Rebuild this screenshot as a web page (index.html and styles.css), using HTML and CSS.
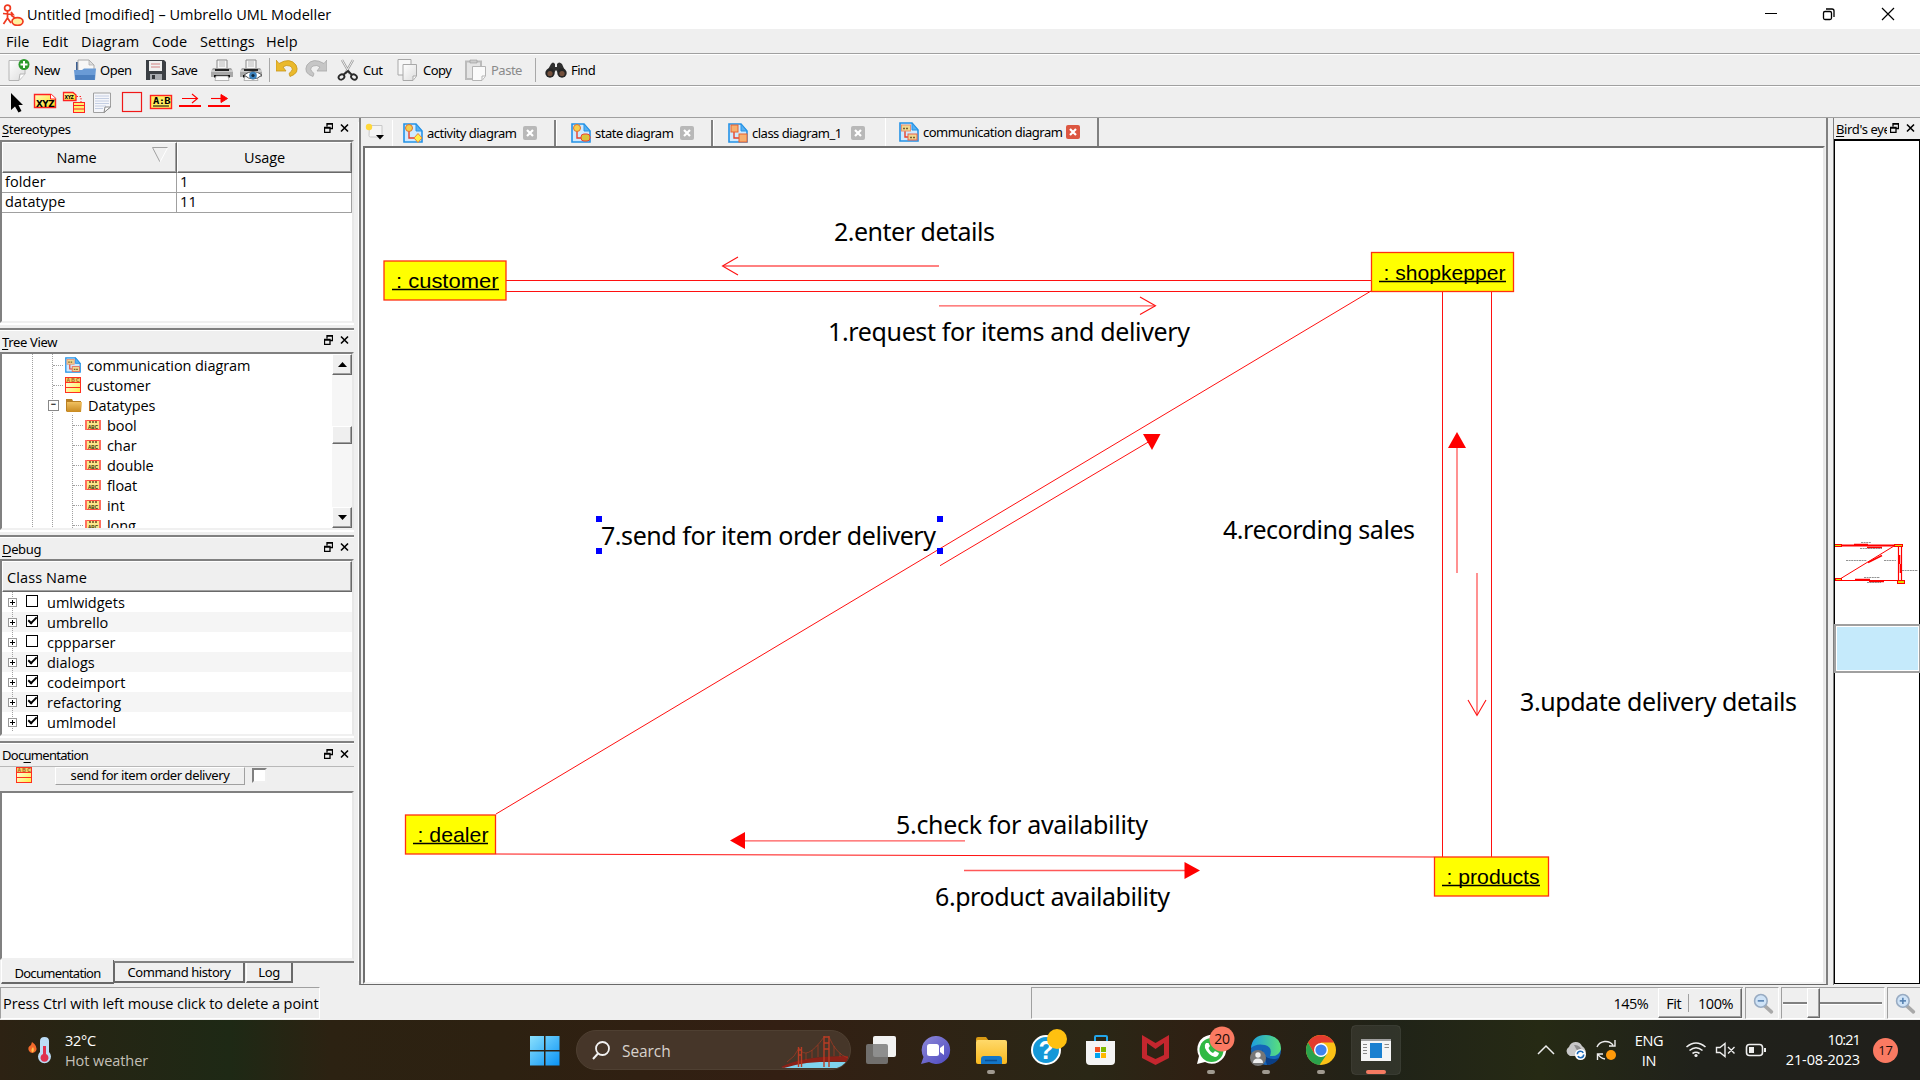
FILE: index.html
```html
<!DOCTYPE html>
<html lang="en">
<head>
<meta charset="utf-8">
<title>Untitled [modified] – Umbrello UML Modeller</title>
<link rel="stylesheet" href="styles.css">
</head>
<body>
<svg class="defs" aria-hidden="true">
  <defs>
    <linearGradient id="gFolder" x1="0" y1="0" x2="0" y2="1"><stop offset="0" stop-color="#f0c060"/><stop offset="1" stop-color="#c98a20"/></linearGradient>
    <linearGradient id="gClass" x1="0" y1="0" x2="1" y2="1"><stop offset="0" stop-color="#fff"/><stop offset="1" stop-color="#ffef40"/></linearGradient>
    <linearGradient id="gXyz" x1="0" y1="0" x2="1" y2="1"><stop offset="0" stop-color="#fffbc0"/><stop offset="1" stop-color="#ffdc10"/></linearGradient>
    <linearGradient id="gPage" x1="0" y1="0" x2="1" y2="1"><stop offset="0" stop-color="#fff"/><stop offset="1" stop-color="#dcdcdc"/></linearGradient>
    <linearGradient id="gWin" x1="0" y1="0" x2="1" y2="1"><stop offset="0" stop-color="#8ae0fd"/><stop offset="1" stop-color="#0a93f5"/></linearGradient>
  </defs>
  <symbol id="float" viewBox="0 0 9 10"><path d="M3 3.500V.5H8.500V5.500H6M3 1.200H8.500M.5 4.500H6V9.500H.5ZM.5 5.200H6" fill="none" stroke="#000" stroke-width="1.300"/></symbol>
  <symbol id="close" viewBox="0 0 9 9"><path d="M1 1 8 8M8 1 1 8" stroke="#000" stroke-width="1.600"/></symbol>
  <symbol id="class" viewBox="0 0 16 16" overflow="visible"><rect x=".5" y=".5" width="15" height="15" fill="url(#gClass)" stroke="#ff3020"/><rect x="1" y="1" width="14" height="4" fill="#f3d36a"/><path d="M1 5.500H15M1 10.500H15" stroke="#ff3020"/><text x="1.500" y="5" font-size="5" font-weight="700" textLength="13" fill="#a85a20" font-family="Liberation Sans">ABC</text></symbol>
  <symbol id="dtype" viewBox="0 0 16 10" overflow="visible"><rect x=".5" y=".5" width="15" height="9" fill="#fbe88a" stroke="#ff5040" /><path d="M4 2H12" stroke="#6a4420" stroke-width="1.600" stroke-dasharray="2 1"/><path d="M1 0V10M15 0V10" stroke="#ff7060" stroke-width="2"/><text x="3" y="8.500" font-size="6" font-weight="700" textLength="10" lengthAdjust="spacingAndGlyphs" fill="#302800" font-family="Liberation Sans">ABC</text></symbol>
  <symbol id="page" viewBox="0 0 20 20"><path d="M1 1H13L19 8V19H1Z" fill="#cfeaff" stroke="#2492e6" stroke-width="1.600"/><path d="M13 1 V8H19Z" fill="#58b0f0" stroke="#2492e6"/></symbol>
  <symbol id="d-act" viewBox="0 0 20 20"><use href="#page"/><path d="M6 6V15H11" fill="none" stroke="#e8402c" stroke-width="1.400"/><circle cx="6" cy="5" r="3.500" fill="#f5cf4c" stroke="#e07030"/><path d="M15 10.500 19 15 15 19.500 11 15Z" fill="#fff04a" stroke="#ee8030"/></symbol>
  <symbol id="d-state" viewBox="0 0 20 20"><use href="#page"/><path d="M6 6V15H11" fill="none" stroke="#e8402c" stroke-width="1.400"/><circle cx="6" cy="5" r="3.500" fill="#f5cf4c" stroke="#e07030"/><rect x="10" y="11" width="9" height="7" rx="3" fill="#d8c43c" stroke="#f04030"/></symbol>
  <symbol id="d-class" viewBox="0 0 20 20"><use href="#page"/><path d="M6 6V15H11" fill="none" stroke="#e8402c" stroke-width="1.400"/><rect x="3" y="2" width="7" height="7" fill="#f6b070" stroke="#e86030"/><rect x="11" y="11" width="8" height="8" fill="#f6b070" stroke="#e86030"/></symbol>
  <symbol id="d-comm" viewBox="0 0 20 20"><use href="#page"/><path d="M6 8V15H10" fill="none" stroke="#e8402c" stroke-width="1.400"/><rect x="2.500" y="3" width="9" height="6" fill="#f0d890" stroke="#e89070"/><rect x="9" y="12" width="9" height="6" fill="#f0d890" stroke="#e86050"/><path d="M4 6.500H10M11 15.500H16.500" stroke="#7a6030" stroke-width="1.600" stroke-dasharray="2 1"/></symbol>
  <symbol id="tabx" viewBox="0 0 14 14"><rect x="0" y="0" width="14" height="14" rx="2" fill="currentColor"/><path d="M4 4 10 10M10 4 4 10" stroke="#fff" stroke-width="2.200"/></symbol>
  <symbol id="folder" viewBox="0 0 16 16"><path d="M0 2H6L7 4H15V15H1L0 14Z" fill="#b97f22"/><path d="M1 5H16L15 15H1Z" fill="url(#gFolder)"/></symbol>
  <symbol id="mag" viewBox="0 0 20 20"><path d="M11 12 17.500 18" stroke="#a9a9a9" stroke-width="3.400" stroke-linecap="round"/><circle cx="7.500" cy="7.500" r="6" fill="#cfe3f7" stroke="#98abc2" stroke-width="1.500"/><path d="M4.500 7.500H10.500" stroke="#5580b0" stroke-width="1.500"/></symbol>
  <symbol id="printer" viewBox="0 0 22 22"><path d="M6 1H16V10H6Z" fill="#f7f7f7" stroke="#888"/><path d="M8 3H14M8 5H14M8 7H14" stroke="#bbb"/><path d="M2 9H20L22 12V18H0V12Z" fill="#a8a8a8"/><path d="M0 12H22" stroke="#eee"/><path d="M4 10H18V12H4Z" fill="#222"/><path d="M3 16H19V18.500H3Z" fill="#111"/><path d="M5 17H17L18 21.500H4Z" fill="#fafafa" stroke="#999" stroke-width=".7"/></symbol>
</svg>

<header class="titlebar">
  <svg class="applogo" width="22" height="22" viewBox="0 0 22 22" fill="none" stroke="#f03a20" stroke-width="1.700"><circle cx="5.500" cy="4" r="2.900"/><path d="M5.500 7V14L1.500 20M5.500 14 9 19M1 9.500 11 10.500 9 8"/><ellipse cx="15.500" cy="17.500" rx="5.500" ry="3.800" fill="#fff2a0"/><path d="M9 11 13 14"/></svg>
  <span class="title">Untitled [modified] – Umbrello UML Modeller</span>
  <svg class="wbtns" width="150" height="29" viewBox="1760 0 150 29" fill="none" stroke="#000"><path d="M1765 13.500H1777"/><rect x="1823.500" y="11.500" width="8" height="8" rx="1.500" stroke-width="1.300"/><path d="M1826 9H1832Q1834 9 1834 11V17" stroke-width="1.300"/><path d="M1882 8 1894 20M1894 8 1882 20" stroke-width="1.200"/></svg>
</header>

<nav class="menubar ui"><span class="m1">File</span><span class="m2">Edit</span><span class="m3">Diagram</span><span class="m4">Code</span><span class="m5">Settings</span><span class="m6">Help</span></nav>

<div class="toolbar tah">
  <button class="tb t-new"><svg width="22" height="22"><path d="M1 1.500H17V15L11 21.500H1Z" fill="url(#gPage)" stroke="#b4b4b4"/><path d="M17 15H12L11 21" fill="#fff" stroke="#b4b4b4"/><circle cx="16" cy="5.500" r="5.500" fill="#2a9a2c"/><path d="M16 2V9M12.500 5.500H19.500" stroke="#fff" stroke-width="2"/></svg>New</button>
  <button class="tb t-open"><svg width="22" height="22"><path d="M2 3H7L8 4V12H2Z" fill="#3c5f92"/><path d="M4 1H15L20 6V14H4Z" fill="#f7f7f7" stroke="#aaa"/><path d="M15 1V6H20Z" fill="#ddd" stroke="#aaa" stroke-width=".7"/><path d="M0 11H8L10 9.500H22L21 21H1Z" fill="#6a9bd6"/><path d="M1 16H21L20.500 21H1.500Z" fill="#4b7fbf"/></svg>Open</button>
  <button class="tb t-save"><svg width="22" height="22"><path d="M1 1H19L21 3V21H1Z" fill="#3b3f44"/><rect x="4" y="2" width="13" height="10" fill="#f0f0f0"/><path d="M6 5H15M6 8H15" stroke="#c66" stroke-width=".8"/><rect x="5" y="15" width="12" height="6" fill="#a8abb0"/><rect x="7" y="16" width="3" height="4" fill="#33363a"/></svg>Save</button>
  <button class="tb t-print"><svg width="22" height="22"><use href="#printer"/></svg></button>
  <button class="tb t-prev"><svg width="22" height="22"><use href="#printer"/><path d="M4 16Q13 9 22 16Q13 24 4 16Z" fill="#fff" stroke="#555"/><circle cx="13" cy="16.500" r="3.800" fill="#3c82bd"/><circle cx="13" cy="16.500" r="1.600" fill="#10283c"/></svg></button>
  <i class="vsep"></i>
  <button class="tb t-undo"><svg width="22" height="22"><path d="M0 1 3 4.500Q14-2 20 6Q24 14 14 17.500L13 14.500Q19 10 14 7Q10 5.500 7 8L10 12H0Z" fill="#eab92c" stroke="#c8951a" stroke-width=".8"/></svg></button>
  <button class="tb t-redo"><svg width="22" height="22"><path d="M22 1 19 4.500Q8-2 2 6Q-2 14 8 17.500L9 14.500Q3 10 8 7Q12 5.500 15 8L12 12H22Z" fill="#c6c6c6" stroke="#a8a8a8" stroke-width=".8"/></svg></button>
  <button class="tb t-cut"><svg width="22" height="22"><path d="M5 1 13 15M16 1 8 15" stroke="#9a9a9a" stroke-width="2.400"/><path d="M5 1 13 15M16 1 8 15" stroke="#eee" stroke-width="1"/><g fill="none" stroke="#2a2a2a" stroke-width="1.900"><ellipse cx="4.500" cy="18" rx="3" ry="2.500" transform="rotate(-35 4.500 18)"/><ellipse cx="17" cy="18" rx="3" ry="2.500" transform="rotate(35 17 18)"/><path d="M6 16 11 12 15 16"/></g></svg>Cut</button>
  <button class="tb t-copy"><svg width="22" height="22"><path d="M1 .5H14V16H1Z" fill="#f8f8f8" stroke="#a8a8a8"/><path d="M6 5.500H19.500V17L16 21.500H6Z" fill="url(#gPage)" stroke="#a8a8a8"/><path d="M19 17H16V21" fill="#fff" stroke="#a8a8a8"/></svg>Copy</button>
  <button class="tb t-paste"><svg width="22" height="22"><path d="M1 2.500H16V20H1Z" fill="#e4e4e4" stroke="#bbb" stroke-width="2"/><path d="M5 1H12V4H5Z" fill="#ccc" stroke="#999" stroke-width=".6"/><path d="M7.500 7.500H20.500V17L17 21.500H7.500Z" fill="#fafafa" stroke="#b4b4b4"/><path d="M20 17H17V21" fill="#fff" stroke="#b4b4b4"/></svg>Paste</button>
  <i class="vsep"></i>
  <button class="tb t-find"><svg width="22" height="22"><path d="M6 5Q8 2 10 5V8H12V5Q14 2 17 5L21 14H13L11 11 9 14H1Z" fill="#303030"/><circle cx="5" cy="14" r="4.700" fill="#262626"/><circle cx="17" cy="14" r="4.700" fill="#262626"/><circle cx="5" cy="14.500" r="2.600" fill="#74503c"/><circle cx="17" cy="14.500" r="2.600" fill="#74503c"/></svg>Find</button>
</div>

<div class="toolbar draw">
  <svg width="240" height="30" viewBox="0 87 240 30">
    <path d="M11 93V110L15 106.500 18.500 112.500 21.500 111 18.500 105H23Z" fill="#000"/>
    <path d="M34.500 94.500H51L55.500 98.500V107.500H34.500Z" fill="url(#gXyz)" stroke="#f22" stroke-width="1.400"/><path d="M50.500 94V99H56" fill="#fff" stroke="#f22"/><text x="36" y="106.500" font-size="8" font-weight="700" textLength="18" lengthAdjust="spacingAndGlyphs" font-family="DejaVu Sans">XYZ</text>
    <path d="M63.500 92.500H73L76 95V100.500H63.500Z" fill="url(#gXyz)" stroke="#f22" stroke-width="1.300"/><text x="64.500" y="99" font-size="5.500" font-weight="700" textLength="9" lengthAdjust="spacingAndGlyphs" font-family="DejaVu Sans">XYZ</text><path d="M76.500 96.500H81V102" fill="none" stroke="#f22" stroke-dasharray="1.500 1.500"/><rect x="73.500" y="102.500" width="11" height="10" fill="#ffef70" stroke="#f22"/><path d="M73 105.500H85M73 109H85" stroke="#f22"/>
    <path d="M93.500 93H110.500V107L104 112.500H93.500Z" fill="#f5f6fa" stroke="#a0a0a0"/><path d="M95 96H109M95 98.500H109M95 101H109M95 103.500H109M95 106H106M95 108.500H103" stroke="#b8c4dc" stroke-width=".8"/><path d="M110.500 107H105L104 112.500Z" fill="#fff" stroke="#888"/>
    <rect x="122.500" y="92.500" width="19" height="19" fill="none" stroke="#f01818" stroke-width="1.200"/>
    <rect x="150.500" y="95.500" width="21" height="13" fill="#ffee60" stroke="#f22" stroke-width="1.400"/><text x="153" y="104" font-size="8" font-weight="700" textLength="17" lengthAdjust="spacingAndGlyphs" font-family="DejaVu Sans Mono">A:B</text><path d="M153 106H169" stroke="#000"/>
    <g stroke="#f00" fill="none"><path d="M182 98.500H197M192 94 197.500 98.500 192 103" stroke-width="1.100"/><path d="M179 106H201M208 106H230" stroke-width="2"/><path d="M211 98.500H222" stroke-width="1.100"/><path d="M221 94.500 227.500 98.500 221 102.500Z" fill="#f00"/></g>
  </svg>
</div>

<main class="work">
  <aside class="left">
    <div class="dtitle tah"><span><u>S</u>tereotypes</span><svg><use href="#float"/></svg><svg><use href="#close"/></svg></div>
    <div class="frame f1 ui">
      <div class="hdr two"><div class="hn">Name<svg width="17" height="16" viewBox="0 0 17 16"><path d="M.5 .5H15.500M.5 .5 8 15" stroke="#a0a0a0" fill="none"/><path d="M15.500 1 8 15" stroke="#fff"/></svg></div><div>Usage</div></div>
      <div class="trow"><div>folder</div><div>1</div></div>
      <div class="trow"><div>datatype</div><div>11</div></div>
    </div>
    <div class="split"></div>
    <div class="dtitle tah d21"><span><u>T</u>ree View</span><svg><use href="#float"/></svg><svg><use href="#close"/></svg></div>
    <div class="frame f2 ui">
      <div class="tree">
        <div class="n a"><svg class="ic"><use href="#d-comm"/></svg>communication diagram</div>
        <div class="n a"><svg class="ic"><use href="#class"/></svg>customer</div>
        <div class="n a open"><svg class="ic"><use href="#folder"/></svg>Datatypes</div>
        <div class="n b"><svg class="ic s"><use href="#dtype"/></svg>bool</div>
        <div class="n b"><svg class="ic s"><use href="#dtype"/></svg>char</div>
        <div class="n b"><svg class="ic s"><use href="#dtype"/></svg>double</div>
        <div class="n b"><svg class="ic s"><use href="#dtype"/></svg>float</div>
        <div class="n b"><svg class="ic s"><use href="#dtype"/></svg>int</div>
        <div class="n b"><svg class="ic s"><use href="#dtype"/></svg>long</div>
      </div>
      <div class="scroll"><b><svg width="9" height="5"><path d="M0 5 4.500 0 9 5Z"/></svg></b><i></i><b class="thumb"></b><i class="rest"></i><b><svg width="9" height="5"><path d="M0 0 4.500 5 9 0Z"/></svg></b></div>
    </div>
    <div class="split"></div>
    <div class="dtitle tah d21"><span><u>D</u>ebug</span><svg><use href="#float"/></svg><svg><use href="#close"/></svg></div>
    <div class="frame f3 ui">
      <div class="hdr one"><div>Class Name</div></div>
      <div class="chk"><i></i><b></b>umlwidgets</div>
      <div class="chk"><i></i><b class="on"></b>umbrello</div>
      <div class="chk"><i></i><b></b>cppparser</div>
      <div class="chk"><i></i><b class="on"></b>dialogs</div>
      <div class="chk"><i></i><b class="on"></b>codeimport</div>
      <div class="chk"><i></i><b class="on"></b>refactoring</div>
      <div class="chk"><i></i><b class="on"></b>umlmodel</div>
    </div>
    <div class="split"></div>
    <div class="dtitle tah tight"><span>Doc<u>u</u>mentation</span><svg><use href="#float"/></svg><svg><use href="#close"/></svg></div>
    <div class="docrow tah"><svg width="16" height="16"><use href="#class"/></svg><span class="docbtn">send for item order delivery</span><span class="docchk"></span></div>
    <div class="frame f4"></div>
    <div class="btabs tah"><span class="cur">Documentation</span><span class="ch">Command history</span><span class="lg">Log</span></div>
  </aside>

  <section class="center">
    <div class="tabs tah">
      <svg class="newtab" width="20" height="18"><path d="M4.500 2.500H17V14H5.500Q4 14 4 12.500Z" fill="#f4f4f4" stroke="#c8c8c8"/><circle cx="4" cy="4" r="3.200" fill="#ffd83a"/><path d="M11 12H19L15 16.500Z"/></svg>
      <div class="tab w1"><svg><use href="#d-act"/></svg><span>activity diagram</span><svg class="x"><use href="#tabx"/></svg></div>
      <div class="tab w2"><svg><use href="#d-state"/></svg><span>state diagram</span><svg class="x"><use href="#tabx"/></svg></div>
      <div class="tab w3"><svg><use href="#d-class"/></svg><span>class diagram_1</span><svg class="x"><use href="#tabx"/></svg></div>
      <div class="tab w4 act"><svg><use href="#d-comm"/></svg><span>communication diagram</span><svg class="x"><use href="#tabx"/></svg></div>
    </div>
    <div class="canvas">
      <svg width="1460" height="834" viewBox="365 148 1460 834">
        <g fill="none" stroke="#ff1010" stroke-width="1">
          <path d="M506 280.500H1371M506 291.500H1371M1442.500 291V857M1491.500 291V857"/>
          <path d="M1371 291 496 814M496 854 1434 857" />
          <path d="M940 565.700 1150 441"/>
        </g>
        <g fill="none" stroke="#ff5858" stroke-width="1.300">
          <path d="M939 266H723M939 305.800H1155M1457 573V446M1477 573V715M965 840.800H744M964 870.500H1185"/>
        </g>
        <g fill="none" stroke="#ff1010" stroke-width="1.100"><path d="M738 257 722.500 266 738 275M1140 297 1155.500 305.800 1140 314.500M1468 700 1477 715.500 1486 700"/></g>
        <g fill="#f00"><path d="M1457 432 1466 448H1448ZM1143 434H1160.500L1152 450ZM730 840.500 745 832V849ZM1200 870.500 1184.500 862V879Z"/></g>
        <g fill="#ff0" stroke="#ff3010" stroke-width="1.300"><rect x="384" y="261" width="122" height="39"/><rect x="1371.500" y="252.500" width="142" height="39"/><rect x="405.500" y="815" width="90" height="39"/><rect x="1434.500" y="857" width="114" height="39"/></g>
        <g stroke="#000" stroke-width="1.300"><path d="M392 289.500H499M1379 281.500H1506M413 843.500H488M1442 885.500H1540"/></g>
        <g class="obj"><text x="396" y="287.500" textLength="102.500" lengthAdjust="spacingAndGlyphs">: customer</text><text x="1383.500" y="280" textLength="122" lengthAdjust="spacingAndGlyphs">: shopkepper</text><text x="417.500" y="841.500" textLength="71" lengthAdjust="spacingAndGlyphs">: dealer</text><text x="1446.500" y="883.500" textLength="93" lengthAdjust="spacingAndGlyphs">: products</text></g>
        <g class="lab"><text x="834" y="241" textLength="161">2.enter details</text><text x="828" y="341" textLength="362">1.request for items and delivery</text><text x="601" y="545" textLength="335">7.send for item order delivery</text><text x="1223" y="539" textLength="192">4.recording sales</text><text x="1520" y="711" textLength="277">3.update delivery details</text><text x="896" y="834" textLength="252">5.check for availability</text><text x="935" y="906" textLength="235">6.product availability</text></g>
        <path d="M596 516h6v6h-6zM596 548h6v6h-6zM937 516h6v6h-6zM937 548h6v6h-6z" fill="#00f"/>
      </svg>
    </div>
  </section>

  <aside class="right">
    <div class="dtitle tah"><span><u>B</u>ird's eye</span><svg><use href="#float"/></svg><svg><use href="#close"/></svg></div>
    <div class="bird">
      <svg width="83" height="842" viewBox="1835 142 83 842">
        <g stroke="#f00" fill="none"><path d="M1835 545.500H1896" stroke-width="1.800"/><path d="M1898.500 546V580M1901.500 546V580M1840 580.500H1898" stroke-width="1.200"/><path d="M1840 579 1894 546"/><path d="M1854 544.500H1868M1867 547.500H1882M1855 579.500H1870M1869 581.500H1884M1899.500 555V564M1900.500 564V573M1868 562.500 1882 555.500" stroke-width="1.600"/></g>
        <g stroke="#f00" fill="#dd0"><rect x="1834.500" y="544.500" width="7" height="2"/><rect x="1894.500" y="544.500" width="8" height="2"/><rect x="1835.500" y="578.500" width="6" height="2"/><rect x="1897.500" y="580.500" width="7" height="3"/></g>
        <path d="M1861 542.500H1871M1860 548.500H1882M1846 560.500H1867M1884 560.500H1896M1902 570.500H1918M1864 577.500H1880M1867 582.500H1881" stroke="#777" stroke-width=".8" stroke-dasharray="2 .6"/>
      </svg>
      <div class="view"></div>
    </div>
  </aside>
</main>

<footer class="status ui">
  <div class="p msg">Press Ctrl with left mouse click to delete a point</div>
  <div class="p zoom"><span class="pct">145%</span><div class="fit"><span>Fit</span><i></i><span>100%</span></div></div>
  <div class="p zo"><svg width="21" height="21"><use href="#mag"/></svg></div>
  <div class="p sl"><i></i><b></b></div>
  <div class="p zi"><svg width="21" height="21" viewBox="0 0 20 20"><use href="#mag"/><path d="M7.500 4.500V10.500" stroke="#5580b0" stroke-width="1.500"/></svg></div>
</footer>

<div class="taskbar ui">
  <svg class="wx" width="30" height="34" viewBox="26 1032 30 34"><path d="M32 1041Q38 1045 36 1050Q32 1054 29 1050Q27 1046 31 1044Z" fill="#f26a2c"/><path d="M33 1046Q35 1050 32.500 1051.500 30 1050 33 1046Z" fill="#ffc04a"/><path d="M40 1040Q40 1036 44.500 1036 49 1036 49 1040V1051A6.500 6.500 0 1 1 40 1051Z" fill="#bcdcf6"/><path d="M43 1045H46V1053A4 4 0 1 1 43 1053Z" fill="#e0304e"/></svg>
  <div class="wt"><span>32°C</span><span class="dim">Hot weather</span></div>
  <svg class="start" width="30" height="30"><path d="M0 0H14V14H0ZM15.500 0H29.500V14H15.500ZM0 15.500H14V29.500H0ZM15.500 15.500H29.500V29.500H15.500Z" fill="url(#gWin)"/></svg>
  <div class="search">
    <svg width="18" height="19" viewBox="0 0 18 19"><circle cx="10.500" cy="7.500" r="6.500" fill="none" stroke="#f2f2f2" stroke-width="1.800"/><path d="M6 12.500 1 18" stroke="#f2f2f2" stroke-width="2"/></svg>
    <span>Search</span>
    <svg class="bridge" width="70" height="34" viewBox="778 1035 70 34"><path d="M780 1068Q800 1060 818 1062H846Q842 1067 836 1068Z" fill="#7fd3ee"/><path d="M779 1067Q800 1056 846 1056V1062Q808 1060 782 1068Z" fill="#8a2118"/><g stroke="#b83c24" fill="none"><path d="M796.500 1047V1067M799.500 1047V1067M796 1050H800M796 1055H800M822 1036V1067M827 1036V1067M822 1037H827M822 1043H827M822 1049H827" stroke-width="1.400"/><path d="M785 1062Q793 1057 797 1048Q804 1062 822 1037M827 1037Q834 1054 846 1058M804 1053V1060M810 1050V1058M816 1045V1057M832 1046V1056M838 1053V1057" stroke-width=".6"/></g></svg>
  </div>
  <svg class="apps" width="560" height="60" viewBox="855 1020 560 60">
    <defs><linearGradient id="e" x1="0" y1="0" x2="1" y2="0"><stop offset="0" stop-color="#1c9de0"/><stop offset="1" stop-color="#5ae07a"/></linearGradient><linearGradient id="f" x1="0" y1="0" x2="0" y2="1"><stop offset="0" stop-color="#ffd96a"/><stop offset="1" stop-color="#f9b81e"/></linearGradient><linearGradient id="c" x1="0" y1="0" x2="1" y2="1"><stop offset="0" stop-color="#8f8ad8"/><stop offset="1" stop-color="#4c48c0"/></linearGradient></defs>
    <rect x="873" y="1036" width="23" height="21" rx="2" fill="#f2f2f2"/><rect x="866" y="1044" width="22" height="20" rx="2" fill="#7c7c7c" opacity=".85"/>
    <path d="M935.500 1036A14 14 0 1 1 929 1062L921 1064 923.500 1057A14 14 0 0 1 935.500 1036Z" fill="url(#c)"/><rect x="927" y="1044" width="12" height="12" rx="2.500" fill="#fff"/><path d="M940 1048 944 1045V1055L940 1052Z" fill="#fff"/>
    <path d="M976 1039Q976 1037 978 1037H986L989 1041H976Z" fill="#d99a14"/><rect x="976" y="1040" width="31" height="24" rx="2" fill="url(#f)"/><path d="M981 1064V1059Q981 1056 984 1056H999Q1002 1056 1002 1059V1064Z" fill="#1376c8"/><path d="M985 1060.500H997" stroke="#0a4f92" stroke-width="1.500"/>
    <circle cx="1046" cy="1050" r="14" fill="#1598d8" stroke="#fff" stroke-width="2"/><text x="1046" y="1059" text-anchor="middle" font-size="25" font-weight="700" fill="#fff" font-family="Liberation Sans">?</text><circle cx="1057" cy="1039" r="10" fill="#ffc010"/>
    <path d="M1095 1043V1037Q1095 1036 1096 1036H1106Q1107 1036 1107 1037V1043" fill="none" stroke="#22a6ea" stroke-width="2"/><path d="M1086 1041H1115V1061Q1115 1065 1111 1065H1090Q1086 1065 1086 1061Z" fill="#f4f4f4"/><path d="M1095 1047h5v5h-5z" fill="#f25022"/><path d="M1101 1047h5v5h-5z" fill="#7fba00"/><path d="M1095 1053h5v5h-5z" fill="#00a4ef"/><path d="M1101 1053h5v5h-5z" fill="#ffb900"/>
    <path d="M1142 1035 1155.500 1043 1169 1035V1058L1155.500 1065 1142 1058ZM1147 1043V1055L1155.500 1059 1164 1055V1043L1155.500 1049Z" fill="#c4262e" fill-rule="evenodd"/>
    <path d="M1197 1064 1199 1056A14.500 14.500 0 1 1 1205 1062Z" fill="#fff"/><circle cx="1211.500" cy="1050" r="12" fill="#2fb944"/><path d="M1206 1043Q1204 1045 1205 1048Q1208 1055 1215 1057Q1218 1057 1219 1053L1215 1051 1213 1053Q1210 1052 1208.500 1048L1210 1046 1208.500 1043Z" fill="#fff"/><circle cx="1222" cy="1039" r="12.500" fill="#fa7a62"/><text class="badge" x="1222" y="1044">20</text>
    <circle cx="1266" cy="1050" r="15" fill="#1565b8"/><path d="M1251 1048Q1252 1035 1266 1035Q1281 1036 1281 1049Q1279 1057 1270 1056Q1273 1047 1265 1045Q1256 1043 1251 1048Z" fill="url(#e)"/><path d="M1262 1049Q1262 1058 1273 1059Q1278 1059 1280 1057Q1275 1065 1267 1065Z" fill="#0b3f86"/><circle cx="1258" cy="1058" r="8" fill="#777"/><circle cx="1258" cy="1055" r="2.700" fill="#eee"/><path d="M1253 1063Q1253 1058.500 1258 1058.500 1263 1058.500 1263 1063Z" fill="#eee"/>
    <circle cx="1321" cy="1050" r="15" fill="#fbc116"/><path d="M1308 1042.500A15 15 0 0 1 1334 1042.500H1321L1314.500 1054Z" fill="#e33b2e"/><path d="M1308 1042.500A15 15 0 0 0 1319.500 1065L1327 1054 1321 1057 1314.500 1054Z" fill="#2ba24c"/><circle cx="1321" cy="1050" r="7" fill="#fff"/><circle cx="1321" cy="1050" r="5.600" fill="#3f83ee"/>
    <rect x="1351.500" y="1025.500" width="49" height="49" rx="4" fill="#fff" fill-opacity=".08" stroke="#fff" stroke-opacity=".08"/><rect x="1361" y="1039" width="30" height="22" fill="#f5f5f5"/><path d="M1361 1040H1391" stroke="#a0a0a0" stroke-width="2"/><rect x="1370" y="1043" width="12" height="15" fill="#1a80d0"/><path d="M1363 1044.500H1367M1363 1047.500H1367M1363 1050.500H1367M1363 1053.500H1367M1384.500 1044.500H1389M1384.500 1047.500H1389" stroke="#888"/>
    <rect x="1366" y="1070" width="20" height="4" rx="2" fill="#f57b62"/><g fill="#a09a90"><rect x="987" y="1070" width="8" height="4" rx="2"/><rect x="1207" y="1070" width="8" height="4" rx="2"/><rect x="1262" y="1070" width="8" height="4" rx="2"/><rect x="1317" y="1070" width="8" height="4" rx="2"/></g>
  </svg>
  <svg class="tray" width="88" height="34" viewBox="1534 1033 88 34"><path d="M1538 1054 1546 1046 1554 1054" fill="none" stroke="#eee" stroke-width="1.500"/><path d="M1570 1056A5 5 0 0 1 1569 1047 7 7 0 0 1 1582 1046Q1588 1050 1584 1056Z" fill="#c8c8c8"/><path d="M1574 1045A7 7 0 0 1 1582 1052L1579 1054Z" fill="#8e8e8e"/><circle cx="1580.500" cy="1054.500" r="5.500" fill="#fff"/><circle cx="1580.500" cy="1054.500" r="3.200" fill="none" stroke="#1668b8" stroke-width="1.500" stroke-dasharray="8 2"/><path d="M1597 1047A9.500 9.500 0 0 1 1613 1045M1615 1040V1046H1609M1605 1059Q1600 1058 1598 1054M1597.500 1060V1054H1603" fill="none" stroke="#eee" stroke-width="1.400"/><circle cx="1611" cy="1055" r="5" fill="#ff9a0a"/></svg>
  <div class="lang"><span>ENG</span><span>IN</span></div>
  <svg class="tray2" width="84" height="24" viewBox="1684 1038 84 24" fill="none" stroke="#eee" stroke-width="1.600"><path d="M1686.500 1047Q1696 1039 1705.500 1047M1689.500 1050.500Q1696 1045 1702.500 1050.500M1692.500 1053.500Q1696 1051 1699.500 1053.500"/><circle cx="1696" cy="1055.500" r="1.600" fill="#eee" stroke="none"/><path d="M1716.500 1047.500H1720L1725 1043.500V1056.500L1720 1052.500H1716.500ZM1728 1047 1734.500 1053.500M1734.500 1047 1728 1053.500" stroke-width="1.400"/><rect x="1746.500" y="1044.500" width="16" height="11" rx="3"/><path d="M1765 1048V1052" stroke-width="2"/><rect x="1749" y="1047" width="5" height="6" fill="#eee" stroke="none"/></svg>
  <div class="clock"><span>10:21</span><span class="date">21-08-2023</span></div>
  <div class="cnt">17</div>
</div>
</body>
</html>
```
FILE: styles.css
```css
* { box-sizing: border-box; }
body { margin: 0; width: 1920px; height: 1080px; overflow: hidden; background: #efefef; color: #000; display: flex; flex-direction: column; }
svg { display: block; flex: none; }
.defs { position: absolute; width: 0; height: 0; overflow: visible; }
.ui { font: 14.5px "Open Sans", sans-serif; letter-spacing: -.08px; }
.tah { font: 13px "Noto Sans", sans-serif; letter-spacing: -.35px; }
u { text-underline-offset: 2px; }

.titlebar { height: 29px; flex: none; background: #fff; display: flex; align-items: center; padding-right: 10px; }
.applogo { margin: 0 0 0 2px; }
.title { margin-left: 3px; font: 14.5px "Open Sans", sans-serif; }
.wbtns { margin-left: auto; }

.menubar { height: 25px; flex: none; border-bottom: 1px solid #a0a0a0; display: flex; align-items: center; padding-left: 6px; letter-spacing: .12px; }
.m1 { width: 36px; } .m2 { width: 39px; } .m3 { width: 71px; } .m4 { width: 48px; } .m5 { width: 66px; }

.toolbar { height: 32px; flex: none; border-top: 1px solid #fff; border-bottom: 1px solid #a0a0a0; display: flex; align-items: center; padding-left: 8px; letter-spacing: -.5px; }
.draw { padding-left: 0; }
.tb { font: inherit; letter-spacing: inherit; border: 0; padding: 0; background: none; color: #000; display: flex; align-items: center; gap: 4px; height: 24px; }
.t-new { width: 66px; } .t-open { width: 71px; } .t-save { width: 66px; } .t-print { width: 29px; } .t-prev { width: 29px; }
.t-undo { width: 29px; margin-left: 6px; } .t-redo { width: 32px; } .t-cut { width: 60px; } .t-copy { width: 68px; } .t-paste { width: 70px; color: #8a8a8a; }
.t-find { margin-left: 9px; }
.vsep { width: 1px; height: 24px; background: #a8a8a8; border-right: 0; }

.work { height: 867px; flex: none; display: flex; }
.left { width: 354px; display: flex; flex-direction: column; }
.dtitle { height: 22px; flex: none; display: flex; align-items: center; padding: 0 5px 0 2px; }
.tight { letter-spacing: -.7px; }
.d21 { height: 21px; }
.dtitle span { flex: 1; overflow: hidden; white-space: nowrap; }
.dtitle svg { width: 9px; height: 10px; margin-left: 7px; margin-bottom: 3px; }
.frame { flex: none; width: 354px; background: #fff; border: 2px solid; border-color: #808080 #e8e8e8 #f0f0f0 #808080; overflow: hidden; }
.f1 { height: 183px; } .f2 { height: 178px; display: flex; } .f3 { height: 177px; display: flex; flex-direction: column; } .f4 { height: 169px; margin-top: 6px; }
.split { flex: none; height: 8px; border-bottom: 1px solid #fff; background: linear-gradient(#fff 0 2px, #efefef 2px); box-shadow: inset 0 -2px 0 #808080; }

.hdr { display: flex; flex: none; }
.hdr > div { background: #efefef; border: 1px solid; border-color: #fff #696969 #696969 #fff; box-shadow: inset -1px -1px 0 #a0a0a0; display: flex; align-items: center; justify-content: center; }
.two > div { width: 175px; height: 31px; }
.two .hn { padding-left: 46px; }
.hn svg { margin: -5px 0 0 55px; }
.one > div { width: 350px; height: 31px; justify-content: flex-start; padding: 1px 0 0 4px; letter-spacing: .1px; }
.trow { display: flex; height: 20px; border-bottom: 1px solid #a0a0a0; letter-spacing: .1px; }
.trow div { width: 175px; border-right: 1px solid #a0a0a0; padding-left: 3px; line-height: 18px; }

.tree { width: 330px; background: repeating-linear-gradient(#a0a0a0 0 1px, transparent 1px 2px) 30px 0 / 1px 100% no-repeat, repeating-linear-gradient(#a0a0a0 0 1px, transparent 1px 2px) 50px 0 / 1px 100% no-repeat, repeating-linear-gradient(#a0a0a0 0 1px, transparent 1px 2px) 70px 61px / 1px 120px no-repeat; padding-top: 1px; }
.n { height: 20px; display: flex; align-items: center; gap: 6px; }
.n::before { content: ""; width: 10px; border-top: 1px dotted #a0a0a0; margin-right: -4px; }
.a { padding-left: 51px; } .b { padding-left: 71px; }
.open::before { content: "−"; width: 9px; height: 9px; font: 700 9px/7px "Liberation Sans"; text-align: center; border: 1px solid #888; background: #fff; margin: 0 1px 0 -5px; letter-spacing: 0; }
.ic { width: 16px; height: 16px; }
.s { height: 10px; }
.scroll { width: 20px; display: flex; flex-direction: column; background: #f6f6f6; }
.scroll b { height: 21px; flex: none; background: #efefef; border: 1px solid; border-color: #fff #696969 #696969 #fff; box-shadow: inset -1px -1px 0 #a0a0a0; display: flex; align-items: center; justify-content: center; }
.scroll i { height: 51px; flex: none; }
.scroll .rest { height: 63px; }
.scroll .thumb { height: 18px; }

.chk { height: 20px; flex: none; display: flex; align-items: center; padding-left: 6px; background: repeating-linear-gradient(#a0a0a0 0 1px, transparent 1px 2px) 10px 0 / 1px 100% no-repeat; line-height: 19px; padding-top: 1px; letter-spacing: 0; }
.chk:nth-child(odd) { background-color: #f5f5f5; }
.chk i { width: 9px; height: 9px; border: 1px solid #999; background: linear-gradient(#000, #000) center / 5px 1px no-repeat, linear-gradient(#000, #000) center / 1px 5px no-repeat, #fff; margin-right: 9px; }
.chk b { width: 12px; height: 12px; border: 1.500px solid #000; margin: -3px 9px 0 0; background: #fff; position: relative; }
.chk .on::after { content: ""; position: absolute; left: 1px; top: 1px; width: 7px; height: 3px; border: solid #000; border-width: 0 0 2px 2px; transform: rotate(-45deg); }

.docrow { height: 19px; flex: none; display: flex; align-items: flex-start; padding: 0 0 0 16px; border-top: 1px solid #b8b8b8; }
.docbtn { margin-left: 23px; width: 190px; height: 18px; border: 1px solid; border-color: #fff #a0a0a0 #a0a0a0 #fff; text-align: center; line-height: 15px; background: #efefef; letter-spacing: -.4px; }
.docchk { margin-left: 7px; width: 15px; height: 15px; margin-top: 1px; background: #fff; border: 2px solid; border-color: #808080 #f0f0f0 #f0f0f0 #808080; }
.btabs { height: 25px; display: flex; padding-left: 1px; background: linear-gradient(#808080, #808080) 113px 1px / 241px 2px no-repeat; }
.btabs span { text-align: center; border: solid #696969; border-width: 0 2px 2px 1px; }
.btabs .cur { width: 113px; height: 24px; line-height: 26px; border-right-width: 1px; border-left-color: #fff; letter-spacing: -.68px; }
.ch { width: 131px; height: 20px; line-height: 18px; margin-top: 3px; letter-spacing: -.42px; }
.btabs .lg { width: 47px; height: 20px; line-height: 18px; margin: 3px 0 0 1px; border-left-color: #fff; }

.center { width: 1469px; margin-left: 5px; border-left: 2px solid #808080; border-right: 2px solid #808080; border-bottom: 1px solid #696969; box-shadow: -5px 0 0 -4px #fff; padding: 0 1px 0 2px; height: 867px; }
.tabs { height: 28px; display: flex; }
.newtab { margin: 5px 7px 0 2px; }
.tab { height: 26px; margin-top: 2px; border-right: 2px solid #808080; border-left: 1px solid #fff; padding-left: 10px; display: flex; align-items: center; color: #b8b8b8; white-space: nowrap; letter-spacing: -.5px; }
.tab span { color: #000; margin-left: 4px; }
.tab svg { width: 20px; height: 20px; }
.tab .x { width: 14px; height: 14px; margin-left: auto; }
.w1 { width: 164px; padding-right: 17px; } .w2 { width: 157px; padding-right: 17px; padding-left: 14px; } .w3 { width: 172px; padding-right: 20px; padding-left: 14px; border-right: 0; } .w4 { width: 214px; padding-right: 17px; padding-left: 13px; }
.act { margin-top: 0; height: 28px; color: #dc5640; }
.canvas { height: 838px; border: 2px solid; border-color: #707070 #e8e8e8 #f4f4f4 #707070; background: #fff; }
.obj { font: 21px "Liberation Sans", sans-serif; }
.lab { font: 25px "Noto Sans", sans-serif; }

.right { width: 87px; margin-left: 5px; border-left: 1px solid #808080; }
.right .dtitle { padding-right: 5px; padding-left: 2px; letter-spacing: -.35px; }
.right .dtitle svg { margin-left: 7px; }
.right .dtitle svg:first-of-type { margin-left: 3px; }
.bird { height: 845px; border: 1px solid #000; border-top-width: 2px; margin-top: -1px; background: #fff; position: relative; }
.bird > svg { margin-top: 1px; }
.view { position: absolute; left: -1px; top: 483px; width: 87px; height: 49px; border: 2px solid #a0a0a0; background: #c5eafb; box-shadow: inset 0 0 0 1px #fff; }

.status { height: 35px; flex: none; display: flex; padding-top: 2px; }
.p { height: 32px; border: 1px solid; border-color: #a0a0a0 #fff #fff #a0a0a0; display: flex; align-items: center; }
.msg { width: 320px; padding-left: 2px; white-space: nowrap; }
.zoom { margin-left: 711px; width: 714px; justify-content: flex-end; border-right: 0; }
.pct { margin-right: 10px; letter-spacing: -.5px; }
.fit { height: 30px; width: 84px; border: 1px solid; border-color: #fff #696969 #696969 #fff; box-shadow: inset -1px -1px 0 #a0a0a0; display: flex; align-items: center; padding-left: 7px; letter-spacing: -.5px; margin-right: 1px; }
.fit i { width: 1px; height: 18px; background: #a0a0a0; margin: 0 9px 0 7px; }
.zo { margin-left: 2px; width: 34px; padding-left: 7px; }
.sl { margin-left: 2px; width: 104px; position: relative; }
.sl i { margin-left: 1px; width: 99px; height: 3px; border-top: 2px solid #808080; border-bottom: 1px solid #fff; }
.sl b { position: absolute; left: 25px; top: 0; width: 13px; height: 30px; background: #efefef; border: 1px solid; border-color: #fff #696969 #696969 #fff; box-shadow: inset -1px -1px 0 #a0a0a0; }
.zi { margin-left: 2px; width: 33px; padding-left: 7px; border-right: 0; }

.taskbar { height: 60px; flex: none; display: flex; align-items: center; color: #fff; background: linear-gradient(90deg, #2d2213 0, #252514 90px, #1e2915 230px, #2c2212 330px, #2d2111 500px, #331f13 780px, #2a2716 1090px, #2f2013 1200px, #202318 1390px, #262a14 1540px, #20211b 1700px, #201f1b 1920px); }
.wx { margin-left: 26px; }
.wt { margin-left: 9px; width: 120px; padding-top: 1px; display: flex; flex-direction: column; line-height: 20px; letter-spacing: -.3px; }
.wt .dim { color: #c4c0b8; letter-spacing: -.08px; }
.start { margin-left: 345px; margin-top: 2px; }
.search { margin-left: 16px; width: 275px; height: 40px; border-radius: 20px; background: #463629; border: 1px solid #4f4032; display: flex; align-items: center; padding-left: 15px; overflow: hidden; }
.search span { margin: 2px 0 0 12px; color: #d8d2cc; font-size: 15.500px; }
.bridge { margin: 3px 0 0 auto; }
.apps { margin-left: 4px; }
.badge { font: 14px "Open Sans", sans-serif; text-anchor: middle; letter-spacing: -.3px; fill: #1a0c08; }
.tray { margin-left: 119px; }
.lang { width: 54px; text-align: center; display: flex; flex-direction: column; padding-top: 1px; line-height: 20px; letter-spacing: -.3px; }
.tray2 { margin-left: 8px; }
.clock { width: 92px; display: flex; flex-direction: column; text-align: right; line-height: 20px; letter-spacing: -.9px; }
.date { letter-spacing: -.15px; }
.cnt { margin-left: 13px; width: 25px; height: 25px; border-radius: 50%; background: #fa7a62; color: #1a0c08; text-align: center; font-size: 13px; line-height: 25px; letter-spacing: -.3px; }
```
